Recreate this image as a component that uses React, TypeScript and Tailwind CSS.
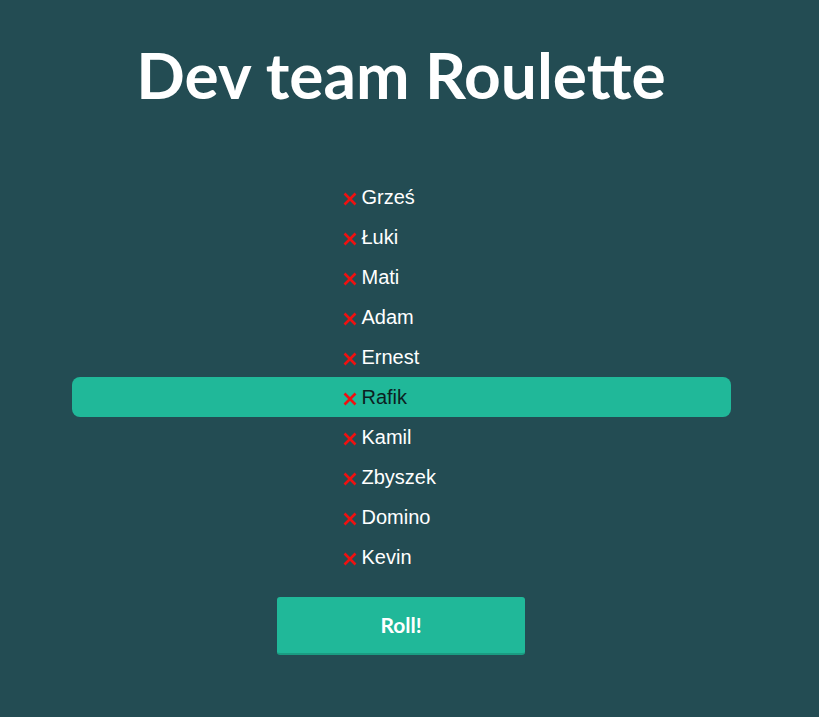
import React, { useState } from "react";

const people = ["Grześ", "Łuki", "Mati", "Adam", "Ernest", "Rafik", "Kamil", "Zbyszek", "Domino", "Kevin"];

function CrossIcon() {
  return (
    <svg viewBox="0 0 14 14" className="h-[14px] w-[14px] shrink-0" fill="none" stroke="#f01010" strokeWidth={2.6}>
      <path d="M1.5 1.5L12.5 12.5M12.5 1.5L1.5 12.5" />
    </svg>
  );
}

export default function App() {
  const [selected, setSelected] = useState(5);

  const roll = () => {
    setSelected(Math.floor(Math.random() * people.length));
  };

  return (
    <div className="min-h-[717px] w-full bg-[#234c53]">
      <div className="flex w-[802px] flex-col items-center">
        <h1
          className="mt-[35px] text-[64px] font-bold leading-[80px] text-white"
          style={{ fontFamily: "Lato, 'Open Sans', sans-serif" }}
        >
          Dev team Roulette
        </h1>

        <ul className="mt-[62px] flex w-[659px] flex-col" style={{ fontFamily: "'Liberation Sans', Arial, sans-serif" }}>
          {people.map((name, i) => (
            <li
              key={name}
              className={`flex h-[40px] items-center gap-[5px] rounded-lg pl-[271px] text-[20px] ${
                i === selected ? "bg-[#20b899] text-[#0c1f22]" : "text-white"
              }`}
            >
              <span className="mt-[3px]">
                <CrossIcon />
              </span>
              <span>{name}</span>
            </li>
          ))}
        </ul>

        <button
          onClick={roll}
          className="mt-[20px] h-[58px] w-[248px] rounded-[3px] border-b-2 border-[#1a9c82] bg-[#20b899] text-[21px] font-bold text-white"
          style={{ fontFamily: "Lato, 'Open Sans', sans-serif" }}
        >
          Roll!
        </button>
      </div>
    </div>
  );
}
